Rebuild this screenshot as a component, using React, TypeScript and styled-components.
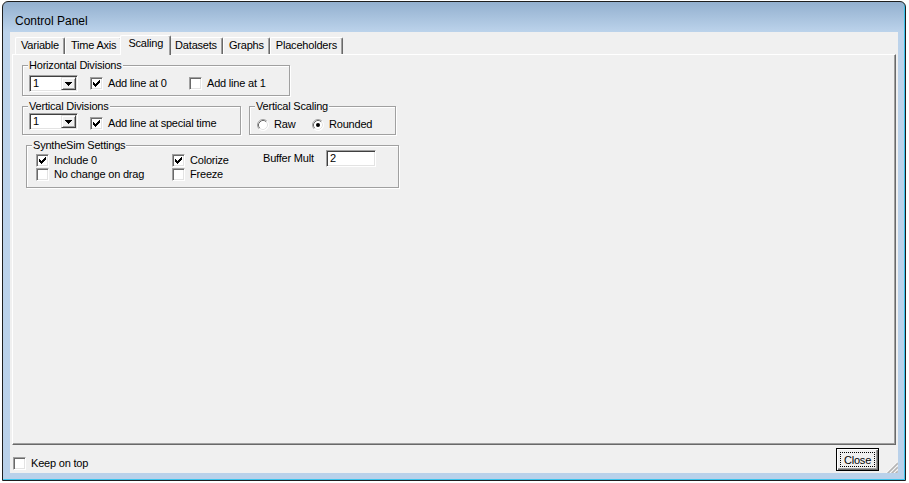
import React from 'react';
import styled, { createGlobalStyle } from 'styled-components';

const Global = createGlobalStyle`
  html, body { margin: 0; padding: 0; background: #fff; }
  body { font-family: "Liberation Sans", Arial, sans-serif; font-size: 11px; color: #000; }
  * { box-sizing: border-box; }
`;

const Screen = styled.div`
  width: 909px;
  height: 483px;
  overflow: hidden;
  padding: 1px 0 0 2px;
  background: #fff;
`;

const Window = styled.div`
  width: 904px;
  height: 480px;
  border: 1px solid #1e1e1e;
  border-radius: 6px 6px 0 0;
  background: linear-gradient(#93b0cf, #bcd3eb 30px, #b9d1ea);
  box-shadow: inset -1px -1px 0 #3cc3ec;
  padding: 0 7px 7px 7px;
  display: flex;
  flex-direction: column;
`;

const TitleBar = styled.div`
  height: 30px;
  padding: 12px 0 0 5px;
  font-size: 12px;
  line-height: 14px;
`;

const Client = styled.div`
  position: relative;
  height: 441px;
  background: #f0f0f0;
  display: flex;
  flex-direction: column;
  letter-spacing: -0.2px;
`;

const TabStrip = styled.div`
  height: 22px;
  display: flex;
  align-items: flex-end;
  padding-left: 5px;
  position: relative;
  z-index: 1;
`;

const Tab = styled.div<{ $active?: boolean }>`
  height: ${(p) => (p.$active ? 20 : 17)}px;
  margin: 0 ${(p) => (p.$active ? -2 : 0)}px ${(p) => (p.$active ? -1 : 0)}px;
  padding: 1px ${(p) => (p.$active ? 7 : 5)}px 0;
  background: #f0f0f0;
  border-top: 1px solid #fff;
  border-left: 1px solid #fff;
  border-right: 1px solid #696969;
  border-radius: 2px 2px 0 0;
  box-shadow: inset -1px 0 0 #a0a0a0;
  line-height: 13px;
  white-space: nowrap;
  position: relative;
  z-index: ${(p) => (p.$active ? 2 : 1)};
`;

const Pane = styled.div`
  margin: 0 2px;
  height: 391px;
  border-top: 1px solid #fff;
  border-left: 1px solid #fff;
  border-right: 1px solid #696969;
  border-bottom: 1px solid #696969;
  box-shadow: inset -1px -1px 0 #a0a0a0;
  padding: 10px 0 0 9px;
  display: flex;
  flex-direction: column;
  align-items: flex-start;
`;

const Row = styled.div<{ $mt?: number; $ml?: number }>`
  display: flex;
  gap: 8px;
  margin-top: ${(p) => p.$mt ?? 0}px;
  margin-left: ${(p) => p.$ml ?? 0}px;
`;

const Group = styled.div<{ $w: number; $h: number; $pad: string }>`
  position: relative;
  width: ${(p) => p.$w}px;
  height: ${(p) => p.$h}px;
  border: 1px solid #a0a0a0;
  box-shadow: inset 1px 1px 0 #fff, 1px 1px 0 #fff;
  padding: ${(p) => p.$pad};
`;

const GroupLabel = styled.span`
  position: absolute;
  top: -7px;
  left: 5px;
  padding: 0 1px;
  background: #f0f0f0;
  line-height: 13px;
  white-space: nowrap;
`;

const GroupRow = styled.div<{ $align?: string }>`
  display: flex;
  align-items: ${(p) => p.$align ?? 'center'};
  height: 17px;
`;

const Combo = styled.div`
  width: 49px;
  height: 17px;
  flex: none;
  display: flex;
  background: #fff;
  border: 1px solid;
  border-color: #a0a0a0 #fff #fff #a0a0a0;
  box-shadow: inset 1px 1px 0 #404040, inset -1px -1px 0 #e3e3e3;
  padding: 1px 1px 1px 1px;
`;

const ComboValue = styled.span`
  flex: 1;
  line-height: 13px;
  padding-left: 2px;
`;

const DropButton = styled.span`
  width: 15px;
  height: 13px;
  background: #f0f0f0;
  border-top: 1px solid #e3e3e3;
  border-left: 1px solid #e3e3e3;
  border-right: 1px solid #404040;
  border-bottom: 1px solid #404040;
  box-shadow: inset 1px 1px 0 #fff, inset -1px -1px 0 #a0a0a0;
  display: flex;
  align-items: center;
  justify-content: center;
`;

const CheckItem = styled.label<{ $w?: number; $ml?: number }>`
  display: inline-flex;
  align-items: center;
  gap: 5px;
  height: 13px;
  line-height: 13px;
  white-space: nowrap;
  width: ${(p) => (p.$w ? `${p.$w}px` : 'auto')};
  margin-left: ${(p) => p.$ml ?? 0}px;
`;

const Box = styled.span`
  width: 13px;
  height: 13px;
  flex: none;
  background: #fff;
  border: 1px solid;
  border-color: #a0a0a0 #fff #fff #a0a0a0;
  box-shadow: inset 1px 1px 0 #696969, inset -1px -1px 0 #e3e3e3;
  display: flex;
  align-items: center;
  justify-content: center;
`;

const SynGrid = styled.div`
  display: grid;
  grid-template-columns: 136px 91px auto;
  grid-template-rows: 14px 14px;
  align-items: center;
`;

const BufferCell = styled.div`
  display: flex;
  align-items: center;
  align-self: start;
  margin-top: -3px;
  height: 17px;
`;

const BufferLabel = styled.span`
  width: 63px;
  line-height: 13px;
`;

const TextBox = styled.span`
  width: 50px;
  height: 17px;
  background: #fff;
  border: 1px solid;
  border-color: #a0a0a0 #fff #fff #a0a0a0;
  box-shadow: inset 1px 1px 0 #404040, inset -1px -1px 0 #e3e3e3;
  padding: 1px 0 0 3px;
  line-height: 13px;
`;

const BottomBar = styled.div`
  flex: 1;
  display: flex;
  justify-content: space-between;
  align-items: flex-start;
  padding: 0 19px 0 3px;
`;

const KeepCheck = styled(CheckItem)`
  margin-top: 12px;
`;

const Button = styled.button`
  position: relative;
  margin-top: 3px;
  width: 43px;
  height: 23px;
  padding: 0;
  font-family: inherit;
  font-size: 11px;
  letter-spacing: -0.2px;
  color: #000;
  background: #f0f0f0;
  border: 1px solid #000;
  box-shadow: inset 1px 1px 0 #fff, inset -1px -1px 0 #696969, inset -2px -2px 0 #a0a0a0;
  &::after {
    content: '';
    position: absolute;
    inset: 3px;
    border: 1px dotted #000;
  }
`;

const Grip = styled.svg`
  position: absolute;
  right: 0;
  bottom: 0;
`;

const CheckMark = () => (
  <svg width="7" height="7" viewBox="0 0 7 7" shapeRendering="crispEdges">
    <path
      d="M0 2h1v3H0z M1 3h1v3H1z M2 4h1v3H2z M3 3h1v3H3z M4 2h1v3H4z M5 1h1v3H5z M6 0h1v3H6z"
      fill="#000"
    />
  </svg>
);

const DownArrow = () => (
  <svg width="7" height="4" viewBox="0 0 7 4" shapeRendering="crispEdges">
    <path d="M0 0h7v1H0z M1 1h5v1H1z M2 2h3v1H2z M3 3h1v1H3z" fill="#000" />
  </svg>
);

const Check: React.FC<{ label: string; checked?: boolean; w?: number; ml?: number }> = ({
  label,
  checked,
  w,
  ml,
}) => (
  <CheckItem $w={w} $ml={ml}>
    <Box>{checked && <CheckMark />}</Box>
    <span>{label}</span>
  </CheckItem>
);

const RadioIcon: React.FC<{ checked?: boolean }> = ({ checked }) => (
  <svg width="12" height="12" viewBox="0 0 12 12">
    <circle cx="6" cy="6" r="5.5" fill="#fff" />
    <path d="M2.11 9.89 A5.5 5.5 0 0 1 9.89 2.11" stroke="#a0a0a0" fill="none" />
    <path d="M9.89 2.11 A5.5 5.5 0 0 1 2.11 9.89" stroke="#ffffff" fill="none" />
    <path d="M2.82 9.18 A4.5 4.5 0 0 1 9.18 2.82" stroke="#696969" fill="none" />
    <path d="M9.18 2.82 A4.5 4.5 0 0 1 2.82 9.18" stroke="#e3e3e3" fill="none" />
    {checked && <circle cx="6" cy="6" r="2" fill="#000" />}
  </svg>
);

const Radio: React.FC<{ label: string; checked?: boolean; w?: number }> = ({ label, checked, w }) => (
  <CheckItem $w={w}>
    <RadioIcon checked={checked} />
    <span>{label}</span>
  </CheckItem>
);

const ComboBox: React.FC<{ value: string }> = ({ value }) => (
  <Combo>
    <ComboValue>{value}</ComboValue>
    <DropButton>
      <DownArrow />
    </DropButton>
  </Combo>
);

const tabs = ['Variable', 'Time Axis', 'Scaling', 'Datasets', 'Graphs', 'Placeholders'];

export default function App() {
  return (
    <>
      <Global />
      <Screen>
        <Window>
          <TitleBar>Control Panel</TitleBar>
          <Client>
            <TabStrip>
              {tabs.map((t) => (
                <Tab key={t} $active={t === 'Scaling'}>
                  {t}
                </Tab>
              ))}
            </TabStrip>
            <Pane>
              <Group $w={268} $h={31} $pad="9px 0 0 6px">
                <GroupLabel>Horizontal Divisions</GroupLabel>
                <GroupRow>
                  <ComboBox value="1" />
                  <Check label="Add line at 0" checked w={99} ml={12} />
                  <Check label="Add line at 1" />
                </GroupRow>
              </Group>
              <Row $mt={10}>
                <Group $w={219} $h={29} $pad="6px 0 0 6px">
                  <GroupLabel>Vertical Divisions</GroupLabel>
                  <GroupRow $align="flex-end">
                    <ComboBox value="1" />
                    <Check label="Add line at special time" checked ml={12} />
                  </GroupRow>
                </Group>
                <Group $w={147} $h={29} $pad="11px 0 0 7px">
                  <GroupLabel>Vertical Scaling</GroupLabel>
                  <GroupRow $align="flex-start">
                    <Radio label="Raw" w={55} />
                    <Radio label="Rounded" checked />
                  </GroupRow>
                </Group>
              </Row>
              <Row $mt={10} $ml={4}>
                <Group $w={373} $h={43} $pad="7px 0 0 9px">
                  <GroupLabel>SyntheSim Settings</GroupLabel>
                  <SynGrid>
                    <Check label="Include 0" checked />
                    <Check label="Colorize" checked />
                    <BufferCell>
                      <BufferLabel>Buffer Mult</BufferLabel>
                      <TextBox>2</TextBox>
                    </BufferCell>
                    <Check label="No change on drag" />
                    <Check label="Freeze" />
                  </SynGrid>
                </Group>
              </Row>
            </Pane>
            <BottomBar>
              <KeepCheck>
                <Box />
                <span>Keep on top</span>
              </KeepCheck>
              <Button>Close</Button>
            </BottomBar>
            <Grip width="12" height="12" viewBox="0 0 12 12">
              {[0, 4, 8].map((k) => (
                <g key={k}>
                  <line x1={k + 0.5} y1={12} x2={12} y2={k + 0.5} stroke="#ffffff" />
                  <line x1={k + 1.5} y1={12} x2={12} y2={k + 1.5} stroke="#a0a0a0" />
                  <line x1={k + 2.5} y1={12} x2={12} y2={k + 2.5} stroke="#a0a0a0" />
                </g>
              ))}
            </Grip>
          </Client>
        </Window>
      </Screen>
    </>
  );
}
